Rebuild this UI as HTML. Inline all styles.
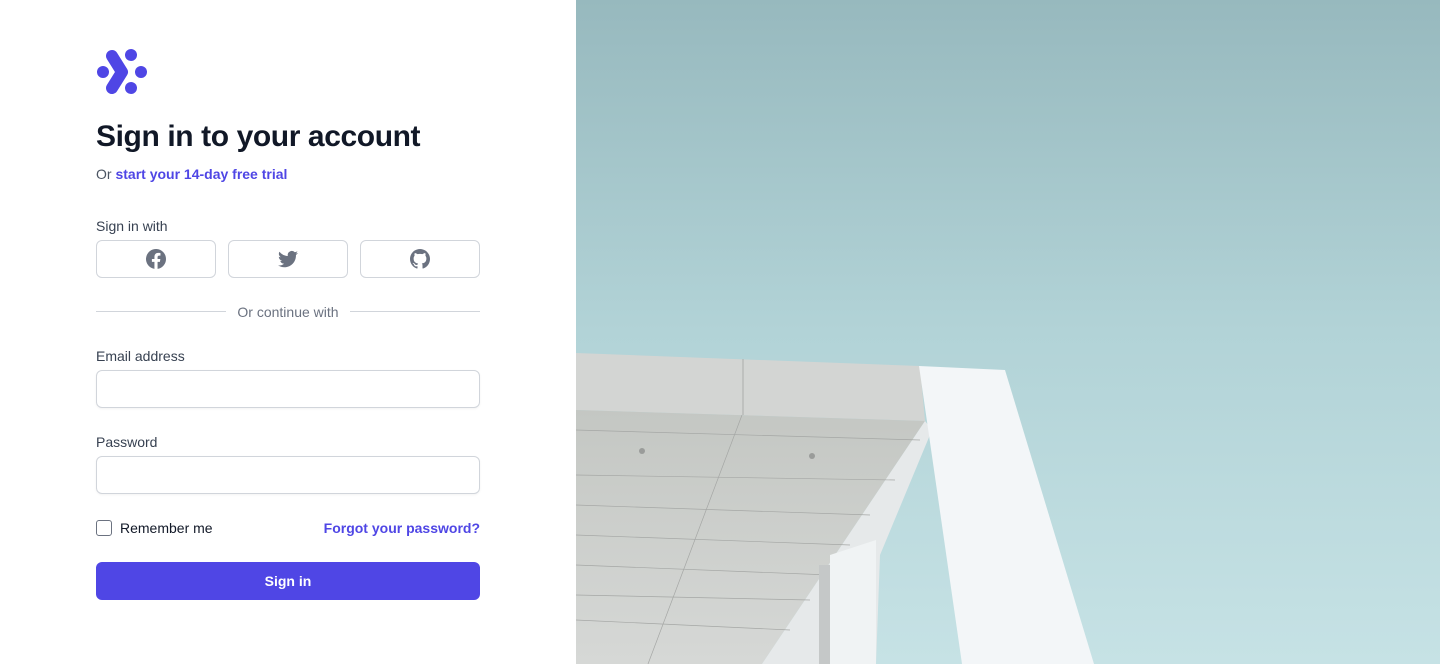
<!DOCTYPE html>
<html><head><meta charset="utf-8"><style>
*{box-sizing:border-box;margin:0;padding:0}
body{width:1440px;height:664px;overflow:hidden;font-family:"Liberation Sans",Arial,sans-serif;background:#fff;position:relative;color:#111827}
.left{position:absolute;left:0;top:0;width:576px;height:664px;background:#fff}
h1{position:absolute;left:96px;top:120px;font-size:30px;font-weight:700;letter-spacing:-0.4px;color:#111827}
.sub{position:absolute;left:96px;top:166px;font-size:14px;color:#4b5563}
.sub a{color:#4f46e5;font-weight:600;text-decoration:none}
.lbl{position:absolute;left:96px;font-size:14px;color:#374151}
.sb{position:absolute;top:240px;width:120px;height:38px;border:1px solid #d1d5db;border-radius:6px;display:flex;align-items:center;justify-content:center}
.inp{position:absolute;left:96px;width:384px;height:38px;border:1px solid #d1d5db;border-radius:6px;box-shadow:0 1px 2px rgba(0,0,0,.05)}
.line{position:absolute;top:311px;height:1px;background:#d1d5db}
.btn{position:absolute;left:96px;top:562px;width:384px;height:38px;background:#4f46e5;border-radius:6px;color:#fff;font-size:14px;font-weight:600;text-align:center;line-height:38px}
</style></head><body>
<div class="left">
<svg style="position:absolute;left:90px;top:42px" width="64" height="58" viewBox="90 42 64 58">
<g fill="#4f46e5"><circle cx="103" cy="72" r="6"/><circle cx="131" cy="55" r="6"/><circle cx="141" cy="72" r="6"/><circle cx="131" cy="88" r="6"/></g>
<polyline points="112,56 122,72 112,88" fill="none" stroke="#4f46e5" stroke-width="12" stroke-linecap="round" stroke-linejoin="round"/>
</svg>
<h1>Sign in to your account</h1>
<div class="sub">Or <a>start your 14-day free trial</a></div>
<div class="lbl" style="top:218px">Sign in with</div>
<div class="sb" style="left:96px"><svg width="20" height="20" viewBox="0 0 20 20"><path fill="#6b7280" d="M20 10a10 10 0 1 0-11.56 9.88v-6.990H5.9V10h2.54V7.8c0-2.5 1.49-3.89 3.78-3.89 1.09 0 2.24.2 2.240.2v2.46h-1.26c-1.24 0-1.63.77-1.63 1.56V10h2.78l-.45 2.89h-2.33v6.99A10 10 0 0 0 20 10z"/></svg></div>
<div class="sb" style="left:228px"><svg width="20" height="20" viewBox="0 0 20 20"><path fill="#6b7280" d="M6.29 18.25c7.55 0 11.67-6.25 11.67-11.67v-.53c.8-.59 1.49-1.3 2.04-2.130-.75.33-1.54.55-2.36.65a4.12 4.12 0 0 0 1.8-2.27c-.8.48-1.68.81-2.6.99A4.1 4.1 0 0 0 9.85 7.03a11.65 11.65 0 0 1-8.45-4.29 4.16 4.16 0 0 0 1.27 5.49C2 8.2 1.37 8.03.8 7.7v.05a4.1 4.1 0 0 0 3.3 4.03 4.1 4.1 0 0 1-1.86.07 4.1 4.1 0 0 0 3.83 2.85A8.23 8.23 0 0 1 0 16.4a11.62 11.62 0 0 0 6.29 1.84"/></svg></div>
<div class="sb" style="left:360px"><svg width="20" height="20" viewBox="0 0 20 20"><path fill="#6b7280" fill-rule="evenodd" d="M10 0C4.48 0 0 4.48 0 10c0 4.42 2.87 8.17 6.84 9.49.5.09.68-.22.68-.48v-1.7c-2.78.6-3.37-1.34-3.37-1.34-.46-1.16-1.11-1.47-1.11-1.47-.91-.62.07-.61.07-.61 1 .07 1.53 1.03 1.53 1.03.89 1.53 2.34 1.09 2.91.83.09-.65.35-1.09.63-1.34-2.22-.25-4.56-1.11-4.56-4.94 0-1.09.39-1.98 1.03-2.68-.1-.25-.45-1.27.1-2.65 0 0 .84-.27 2.75 1.02A9.58 9.58 0 0 1 10 4.84c.85 0 1.7.11 2.5.34 1.91-1.29 2.75-1.02 2.75-1.02.55 1.38.2 2.4.1 2.65.64.7 1.03 1.59 1.03 2.68 0 3.84-2.34 4.68-4.57 4.93.36.31.68.92.68 1.85v2.75c0 .27.18.58.69.48A10 10 0 0 0 20 10C20 4.48 15.52 0 10 0z"/></svg></div>
<div class="line" style="left:96px;width:130px"></div>
<div class="line" style="left:350px;width:130px"></div>
<div style="position:absolute;left:226px;width:124px;top:304px;text-align:center;font-size:14px;color:#6b7280">Or continue with</div>
<div class="lbl" style="top:348px">Email address</div>
<div class="inp" style="top:370px"></div>
<div class="lbl" style="top:434px">Password</div>
<div class="inp" style="top:456px"></div>
<div style="position:absolute;left:96px;top:520px;width:16px;height:16px;border:1px solid #6b7280;border-radius:3px"></div>
<div style="position:absolute;left:120px;top:520px;font-size:14px;color:#111827">Remember me</div>
<div style="position:absolute;right:96px;top:520px;font-size:14px;color:#4f46e5;font-weight:600">Forgot your password?</div>
<div class="btn">Sign in</div>
</div>
<svg style="position:absolute;left:576px;top:0" width="864" height="664" viewBox="576 0 864 664">
<defs><linearGradient id="sky" x1="0" y1="0" x2="0" y2="1"><stop offset="0" stop-color="#97b9be"/><stop offset=".5" stop-color="#b2d3d7"/><stop offset="1" stop-color="#c6e2e5"/></linearGradient>
<linearGradient id="ceil" x1="0" y1="0" x2="0" y2="1"><stop offset="0" stop-color="#c4c7c3"/><stop offset="1" stop-color="#d6d8d6"/></linearGradient></defs>
<rect x="576" y="0" width="864" height="664" fill="url(#sky)"/>
<polygon points="576,353 920,366 925,421 576,410" fill="#d3d5d3"/>
<line x1="743" y1="359" x2="743" y2="415" stroke="#9a9c9a" stroke-width=".7"/>
<polygon points="576,410 925,421 762,664 576,664" fill="url(#ceil)"/>
<polygon points="925,421 932,430 880,555 876,664 762,664" fill="#e6e9ea"/>
<g stroke="#a5a7a5" stroke-width=".7">
<line x1="576" y1="430" x2="920" y2="440"/><line x1="576" y1="475" x2="895" y2="480"/><line x1="576" y1="505" x2="870" y2="515"/><line x1="576" y1="535" x2="850" y2="545"/><line x1="576" y1="565" x2="830" y2="575"/><line x1="576" y1="595" x2="810" y2="600"/><line x1="576" y1="620" x2="790" y2="630"/>
<line x1="742" y1="415" x2="648" y2="664"/></g>
<circle cx="642" cy="451" r="3" fill="#9a9c9a"/><circle cx="812" cy="456" r="3" fill="#9a9c9a"/>
<rect x="819" y="565" width="11" height="99" fill="#c5c8c8"/>
<polygon points="830,555 876,540 876,664 830,664" fill="#f0f3f4"/>
<polygon points="919,366 1005,370 1094,664 962,664" fill="#f3f6f8"/>
</svg>
</body></html>
